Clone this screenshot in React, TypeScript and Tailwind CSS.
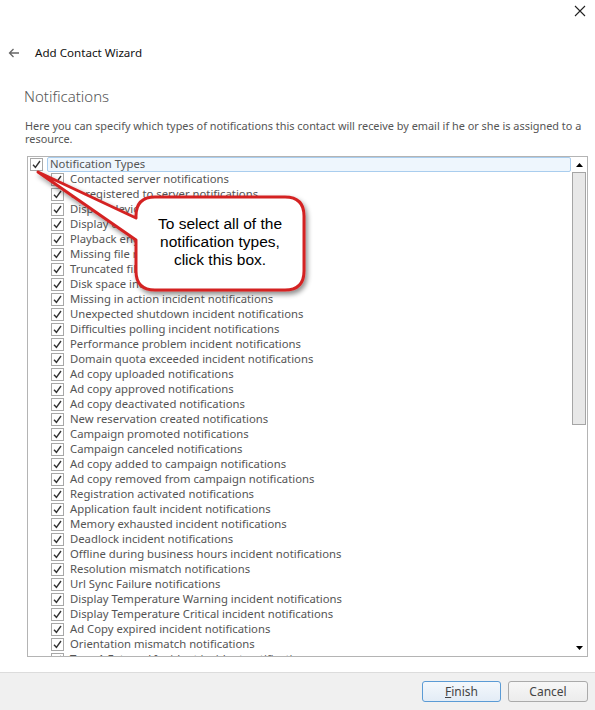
import * as React from "react";

const items = [
  "Contacted server notifications",
  "Unregistered to server notifications",
  "Display device disconnected notifications",
  "Display device error notifications",
  "Playback engine notifications",
  "Missing file notifications",
  "Truncated file notifications",
  "Disk space incident notifications",
  "Missing in action incident notifications",
  "Unexpected shutdown incident notifications",
  "Difficulties polling incident notifications",
  "Performance problem incident notifications",
  "Domain quota exceeded incident notifications",
  "Ad copy uploaded notifications",
  "Ad copy approved notifications",
  "Ad copy deactivated notifications",
  "New reservation created notifications",
  "Campaign promoted notifications",
  "Campaign canceled notifications",
  "Ad copy added to campaign notifications",
  "Ad copy removed from campaign notifications",
  "Registration activated notifications",
  "Application fault incident notifications",
  "Memory exhausted incident notifications",
  "Deadlock incident notifications",
  "Offline during business hours incident notifications",
  "Resolution mismatch notifications",
  "Url Sync Failure notifications",
  "Display Temperature Warning incident notifications",
  "Display Temperature Critical incident notifications",
  "Ad Copy expired incident notifications",
  "Orientation mismatch notifications",
  "Type 1 External Incident incident notifications",
];

const Check = () => (
  <span className="flex h-[13px] w-[13px] shrink-0 items-center justify-center border border-[#a8a8a8] bg-white">
    <svg width="9" height="9" viewBox="0 0 9 9">
      <path d="M1 4.8 L3.4 7.3 L8 1" fill="none" stroke="#333" strokeWidth="1.4" />
    </svg>
  </span>
);

const Callout = () => (
  <div className="pointer-events-none absolute left-0 top-0">
    <svg width="320" height="300" className="absolute left-0 top-0">
      <defs>
        <filter id="sh" x="-10%" y="-10%" width="130%" height="130%">
          <feDropShadow dx="2" dy="3" stdDeviation="2.5" floodColor="#000" floodOpacity="0.45" />
        </filter>
      </defs>
      <path
        d="M155 197 H285 Q304 197 304 216 V271 Q304 290 285 290 H155 Q136 290 136 271 V240 L38 172 L136 218 V216 Q136 197 155 197 Z"
        fill="#fff"
        stroke="#d42424"
        strokeWidth="3"
        strokeLinejoin="round"
        filter="url(#sh)"
      />
    </svg>
    <div className="absolute left-[136px] top-[215px] w-[168px] text-center font-['Liberation_Sans',Arial,sans-serif] text-[15.5px] leading-[18px] text-black">
      To select all of the
      <br />
      notification types,
      <br />
      click this box.
    </div>
  </div>
);

export default function App() {
  return (
    <div className="relative flex h-[710px] w-[595px] flex-col bg-white font-['Noto_Sans','Open_Sans',sans-serif]">
      <div className="flex h-[27px] justify-end pr-[9px] pt-[5px]">
        <svg width="12" height="12" viewBox="0 0 12 12">
          <path d="M1 1 L11 11 M11 1 L1 11" stroke="#222" strokeWidth="1.1" />
        </svg>
      </div>
      <div className="flex items-center pl-[8px] pt-[17px]">
        <svg width="12" height="10" viewBox="0 0 12 10">
          <path d="M11 5 H1.5 M5.5 1 L1.5 5 L5.5 9" fill="none" stroke="#666" strokeWidth="1.3" />
        </svg>
        <span className="ml-[15px] text-[11.6px] leading-[18px] text-[#111]">Add Contact Wizard</span>
      </div>
      <div className="pl-[24px] pt-[23px] text-[15px] font-light leading-[22px] text-[#555]">Notifications</div>
      <div className="pl-[25px] pr-[2px] pt-[12px] text-[10.9px] leading-[13px] text-[#555]">
        Here you can specify which types of notifications this contact will receive by email if he or she is assigned to a resource.
      </div>
      <div className="ml-[27px] mt-[11px] flex h-[501px] w-[561px] border border-[#b4b4b4] bg-white">
        <div className="flex-1 overflow-hidden pl-[2px] text-[11.3px] text-[#555]">
          <div className="flex h-[15px] items-center">
            <Check />
            <div className="ml-[4px] flex h-[15px] flex-1 items-center rounded-[2px] border border-[#a9cdee] bg-[#eef6fd] pl-[2px]">
              Notification Types
            </div>
          </div>
          {items.map((t) => (
            <div key={t} className="flex h-[15px] items-center whitespace-nowrap pl-[21px]">
              <Check />
              <span className="ml-[6px]">{t}</span>
            </div>
          ))}
        </div>
        <div className="flex w-[16px] flex-col items-center">
          <div className="flex h-[15px] items-center justify-center">
            <svg width="7" height="4" viewBox="0 0 7 4">
              <path d="M0 4 L3.5 0 L7 4 Z" fill="#000" />
            </svg>
          </div>
          <div className="h-[253px] w-[14px] border border-[#a5a5a5] bg-[#e8e8e8]" />
          <div className="flex-1" />
          <div className="flex h-[17px] items-center justify-center">
            <svg width="7" height="4" viewBox="0 0 7 4">
              <path d="M0 0 L7 0 L3.5 4 Z" fill="#000" />
            </svg>
          </div>
        </div>
      </div>
      <div className="flex-1" />
      <div className="flex h-[38px] items-center justify-end gap-[7px] border-t border-[#dcdcdc] bg-[#f0f0f0] pr-[7px]">
        <button className="h-[21px] w-[79px] rounded-[3px] border border-[#5b9bd5] bg-gradient-to-b from-[#f4f8fc] to-[#e3ecf6] text-[12px] text-[#444]">
          <span className="underline">F</span>inish
        </button>
        <button className="h-[21px] w-[80px] rounded-[3px] border border-[#aaa] bg-gradient-to-b from-[#f7f7f7] to-[#ececec] text-[12px] text-[#444]">
          Cancel
        </button>
      </div>
      <Callout />
    </div>
  );
}
